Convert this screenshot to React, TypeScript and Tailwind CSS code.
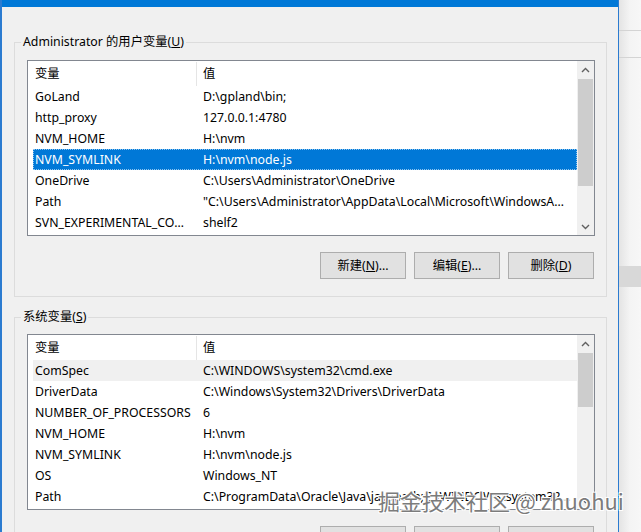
import React from "react"

type Row = [string, string]

const userVars: Row[] = [
  ["GoLand", "D:\\gpland\\bin;"],
  ["http_proxy", "127.0.0.1:4780"],
  ["NVM_HOME", "H:\\nvm"],
  ["NVM_SYMLINK", "H:\\nvm\\node.js"],
  ["OneDrive", "C:\\Users\\Administrator\\OneDrive"],
  ["Path", "\"C:\\Users\\Administrator\\AppData\\Local\\Microsoft\\WindowsApps;C:\\Users"],
  ["SVN_EXPERIMENTAL_COMMANDS", "shelf2"],
]

const sysVars: Row[] = [
  ["ComSpec", "C:\\WINDOWS\\system32\\cmd.exe"],
  ["DriverData", "C:\\Windows\\System32\\Drivers\\DriverData"],
  ["NUMBER_OF_PROCESSORS", "6"],
  ["NVM_HOME", "H:\\nvm"],
  ["NVM_SYMLINK", "H:\\nvm\\node.js"],
  ["OS", "Windows_NT"],
  ["Path", "C:\\ProgramData\\Oracle\\Java\\javapath;C:\\WINDOWS\\system32;C:\\WINDOWS"],
]

function Chevron({ up }: { up?: boolean }) {
  return (
    <svg width="9" height="6" viewBox="0 0 9 6" className="block">
      <polyline
        points={up ? "1,5 4.5,1.5 8,5" : "1,1 4.5,4.5 8,1"}
        fill="none"
        stroke="#606060"
        strokeWidth="1.4"
      />
    </svg>
  )
}

function VarList({
  rows,
  selected,
  focused,
  thumb,
}: {
  rows: Row[]
  selected: number
  focused: boolean
  thumb: number
}) {
  return (
    <div className="flex h-[176px] border border-[#828790] bg-white">
      <div className="flex-1 min-w-0 overflow-hidden pl-[5px]">
        {/* header */}
        <div className="flex h-[25px] items-center">
          <div className="w-[164px] h-[24px] flex items-center pl-[2px] border-r border-[#e5e5e5]">变量</div>
          <div className="pl-[6px]">值</div>
        </div>
        {rows.map(([name, value], i) => {
          const sel = i === selected
          return (
            <div
              key={name + i}
              className={
                sel
                  ? focused
                    ? "flex h-[21px] items-center bg-[#0078d7] text-white outline-1 outline-dotted outline-[#8cc4f0] -outline-offset-1"
                    : "flex h-[21px] items-center bg-[#f0f0f0]"
                  : "flex h-[21px] items-center"
              }
            >
              <div className="w-[164px] shrink-0 pl-[2px] pr-[4px] truncate">{name}</div>
              <div className="flex-1 min-w-0 pl-[6px] pr-[6px] truncate">{value}</div>
            </div>
          )
        })}
      </div>
      {/* scrollbar */}
      <div className="w-[17px] shrink-0 flex flex-col bg-[#f0f0f0]">
        <div className="h-[17px] flex items-center justify-center">
          <Chevron up />
        </div>
        <div className="flex-1">
          <div className="mt-[1px] mx-[1px] bg-[#cdcdcd]" style={{ height: thumb }} />
        </div>
        <div className="h-[17px] flex items-center justify-center">
          <Chevron />
        </div>
      </div>
    </div>
  )
}

function Buttons() {
  const btn =
    "w-[86px] h-[27px] border border-[#adadad] bg-[#e1e1e1] flex items-center justify-center"
  return (
    <div className="flex justify-end gap-2 mt-4 mr-[1px]">
      <div className={btn}>
        新建(<span className="underline">N</span>)...
      </div>
      <div className={btn}>
        编辑(<span className="underline">E</span>)...
      </div>
      <div className={btn}>
        删除(<span className="underline">D</span>)
      </div>
    </div>
  )
}

export default function App() {
  return (
    <div className="relative w-[641px] h-[532px] overflow-hidden flex bg-[#f6f6f6] text-[12.3px] leading-[17px] text-black font-['Noto_Sans','Noto_Sans_CJK_SC',sans-serif]">
      {/* dialog */}
      <div className="w-[619px] shrink-0 flex flex-col bg-[#f0f0f0] border-l-2 border-r border-[#2b7bd0]">
        <div className="h-[7px] shrink-0 bg-[#0078d7]" />
        <div className="shrink-0 pl-[12px] pr-[11px] pt-[26px]">
          <fieldset className="min-w-0 border border-[#dcdcdc] pl-[12px] pr-[11px] pb-[17px]">
            <legend className="-ml-[6px] px-[2px] h-[18px] leading-[18px]">
              Administrator 的用户变量(<span className="underline">U</span>)
            </legend>
            <div className="mt-[9px]">
              <VarList rows={userVars} selected={3} focused thumb={107} />
            </div>
            <Buttons />
          </fieldset>
          <fieldset className="min-w-0 mt-[11px] border border-[#dcdcdc] pl-[12px] pr-[11px] pb-[17px]">
            <legend className="-ml-[6px] px-[2px] h-[18px] leading-[18px]">
              系统变量(<span className="underline">S</span>)
            </legend>
            <div className="mt-[8px]">
              <VarList rows={sysVars} selected={0} focused={false} thumb={54} />
            </div>
            <Buttons />
          </fieldset>
        </div>
      </div>
      {/* window behind */}
      <div className="flex-1 flex flex-col bg-gradient-to-r from-[#e4e4e4] via-[#f4f4f4] to-[#f7f7f7]">
        <div className="h-[30px] shrink-0" />
        <div className="h-px shrink-0 bg-[#d4d4d4]" />
        <div className="h-[26px] shrink-0" />
        <div className="h-px shrink-0 bg-[#d4d4d4]" />
        <div className="h-[208px] shrink-0" />
        <div className="h-[21px] shrink-0 bg-[#d8d8d8]" />
      </div>
      {/* watermark */}
      <div className="absolute left-[378px] top-[486px] text-[22px] leading-[28px] text-[#7c7c7c] font-['Noto_Sans_CJK_SC',sans-serif] [text-shadow:0_0_1px_#fff,1px_1px_0_#fff,-1px_-1px_0_#fff,1px_-1px_0_#fff,-1px_1px_0_#fff] whitespace-nowrap">
        掘金技术社区 @ zhuohui
      </div>
    </div>
  )
}
